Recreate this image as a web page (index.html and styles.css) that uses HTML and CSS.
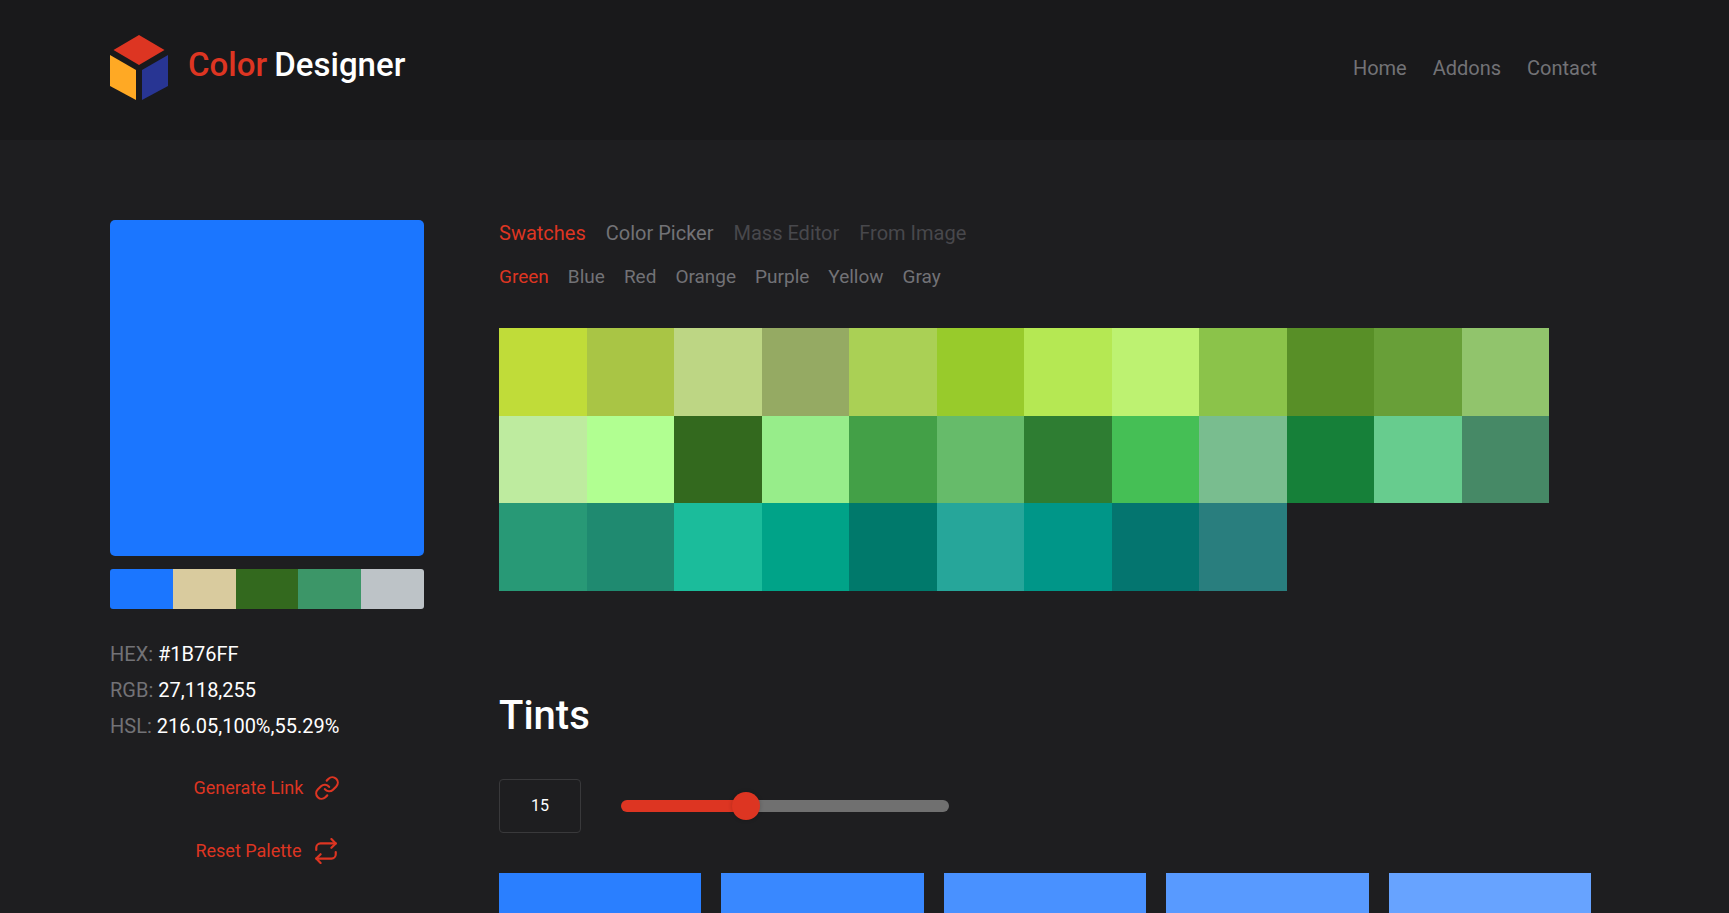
FILE: index.html
```html
<!DOCTYPE html>
<html lang="en">
<head>
<meta charset="utf-8">
<meta name="viewport" content="width=device-width, initial-scale=1">
<title>Color Designer</title>
<link rel="stylesheet" href="styles.css">
</head>
<body>
<header class="header">
  <a class="logo" href="#">
    <svg class="logo-mark" viewBox="0 0 58 66" aria-hidden="true">
      <path fill="#dd3522" d="M29 0 54.500 15 29 30 3.500 15z"/>
      <path fill="#ffa924" d="M0 20 26 35V65L0 51z"/>
      <path fill="#283593" d="M58 20 32 35V65L58 51z"/>
    </svg>
    <span class="logo-text"><span class="accent">Color</span> <span class="logo-second">Designer</span></span>
  </a>
  <nav class="nav">
    <a href="#">Home</a>
    <a href="#">Addons</a>
    <a href="#">Contact</a>
  </nav>
</header>
<main class="page">
  <aside class="sidebar">
    <div class="preview"></div>
    <div class="palette">
      <button aria-label="#1B76FF"></button><button aria-label="#D9CB9E"></button><button aria-label="#33691E"></button><button aria-label="#3C9668"></button><button aria-label="#BDC3C7"></button>
    </div>
    <dl class="values">
      <div><dt>HEX:</dt> <dd>#1B76FF</dd></div>
      <div><dt>RGB:</dt> <dd>27,118,255</dd></div>
      <div><dt>HSL:</dt> <dd>216.05,100%,55.29%</dd></div>
    </dl>
    <div class="actions">
      <button class="action">Generate Link
        <svg viewBox="0 0 24 24" aria-hidden="true"><path d="M10 13a5 5 0 0 0 7.540.54l3-3a5 5 0 0 0-7.070-7.070l-1.720 1.710"/><path d="M14 11a5 5 0 0 0-7.540-.54l-3 3a5 5 0 0 0 7.070 7.070l1.710-1.710"/></svg>
      </button>
      <button class="action">Reset Palette
        <svg viewBox="0 0 24 24" aria-hidden="true"><path d="m17 1 4 4-4 4"/><path d="M3 11V9a4 4 0 0 1 4-4h14"/><path d="m7 23-4-4 4-4"/><path d="M21 13v2a4 4 0 0 1-4 4H3"/></svg>
      </button>
    </div>
  </aside>
  <section class="content">
    <div class="tabs">
      <button class="tab active">Swatches</button>
      <button class="tab">Color Picker</button>
      <button class="tab" disabled>Mass Editor</button>
      <button class="tab" disabled>From Image</button>
    </div>
    <div class="tabs hues">
      <button class="tab active">Green</button>
      <button class="tab">Blue</button>
      <button class="tab">Red</button>
      <button class="tab">Orange</button>
      <button class="tab">Purple</button>
      <button class="tab">Yellow</button>
      <button class="tab">Gray</button>
    </div>
    <div class="swatches">
      <button aria-label="#C0DC39"></button><button aria-label="#A9C545"></button><button aria-label="#BDD684"></button><button aria-label="#95AA63"></button><button aria-label="#AAD055"></button><button aria-label="#98CB2B"></button><button aria-label="#B5E853"></button><button aria-label="#BDF271"></button><button aria-label="#8BC34A"></button><button aria-label="#588F27"></button><button aria-label="#689F38"></button><button aria-label="#91C46C"></button>
      <button aria-label="#BEEB9F"></button><button aria-label="#B1FF91"></button><button aria-label="#33691E"></button><button aria-label="#97ED8A"></button><button aria-label="#43A047"></button><button aria-label="#66BB6A"></button><button aria-label="#2E7D32"></button><button aria-label="#45BF55"></button><button aria-label="#79BD8F"></button><button aria-label="#168039"></button><button aria-label="#67CC8E"></button><button aria-label="#468966"></button>
      <button aria-label="#289976"></button><button aria-label="#1F8A70"></button><button aria-label="#1BBC9B"></button><button aria-label="#00A388"></button><button aria-label="#00796B"></button><button aria-label="#26A69A"></button><button aria-label="#009688"></button><button aria-label="#04756F"></button><button aria-label="#297E7E"></button>
    </div>
    <h2 class="title">Tints</h2>
    <div class="amount">
      <input class="amount-box" type="text" inputmode="numeric" value="15" aria-label="Number of tints">
      <input class="amount-range" type="range" min="5" max="32" value="15" aria-label="Number of tints slider">
    </div>
    <div class="tints">
      <div></div><div></div><div></div><div></div><div></div>
    </div>
  </section>
</main>
</body>
</html>
```
FILE: styles.css
```css
* { box-sizing: border-box; }

body {
  margin: 0;
  background: #1e1e20;
  color: #fff;
  font: 20px/36px Roboto, sans-serif;
}

a { color: inherit; text-decoration: none; }

button {
  margin: 0;
  padding: 0;
  border: 0;
  background: none;
  color: inherit;
  font: inherit;
  cursor: pointer;
}

.header {
  display: flex;
  justify-content: space-between;
  align-items: center;
  padding: 35px 132px 39px 110px;
  background: #19191b;
}

.logo { display: flex; align-items: flex-start; gap: 20px; }
.logo-mark { width: 58px; height: 66px; }
.logo-text { font-size: 33px; font-weight: 500; line-height: 60px; }
.accent { color: #dd3522; }
.logo-second { margin-left: -1px; }

.nav { display: flex; gap: 26px; color: #727276; }

.page {
  display: flex;
  gap: 75px;
  padding: 80px 138px 80px 110px;
}

.sidebar { flex: 0 0 314px; }
.preview { height: 336px; border-radius: 5px; background: #1b76ff; }

.palette {
  display: grid;
  grid-template-columns: repeat(5, 1fr);
  height: 40px;
  margin-top: 13px;
  border-radius: 3px;
  overflow: hidden;
}
.palette :nth-child(1) { background: #1b76ff; }
.palette :nth-child(2) { background: #d9cb9e; }
.palette :nth-child(3) { background: #33691e; }
.palette :nth-child(4) { background: #3c9668; }
.palette :nth-child(5) { background: #bdc3c7; }

.values { margin: 27px 0 0; }
.values dt, .values dd { display: inline; margin: 0; }
.values dt { color: #727276; }

.actions {
  display: flex;
  flex-direction: column;
  align-items: center;
  gap: 27px;
  margin-top: 26px;
}
.action {
  display: flex;
  align-items: center;
  gap: 11px;
  color: #dd3522;
  font-size: 18px;
}
.action svg {
  width: 26px;
  height: 26px;
  fill: none;
  stroke: currentColor;
  stroke-width: 2;
  stroke-linecap: round;
  stroke-linejoin: round;
}

.content { flex: 1; min-width: 0; }

.tabs { display: flex; gap: 20px; line-height: 26px; color: #727276; }
.tab.active { color: #dd3522; }
.tab:disabled { color: #48484c; }
.hues { gap: 19px; margin-top: 18px; font-size: 19px; }

.swatches {
  display: grid;
  grid-template-columns: repeat(12, 1fr);
  max-width: 1050px;
  margin-top: 38px;
}
.swatches button { aspect-ratio: 1; }
.swatches :nth-child(1) { background: #c0dc39; }
.swatches :nth-child(2) { background: #a9c545; }
.swatches :nth-child(3) { background: #bdd684; }
.swatches :nth-child(4) { background: #95aa63; }
.swatches :nth-child(5) { background: #aad055; }
.swatches :nth-child(6) { background: #98cb2b; }
.swatches :nth-child(7) { background: #b5e853; }
.swatches :nth-child(8) { background: #bdf271; }
.swatches :nth-child(9) { background: #8bc34a; }
.swatches :nth-child(10) { background: #588f27; }
.swatches :nth-child(11) { background: #689f38; }
.swatches :nth-child(12) { background: #91c46c; }
.swatches :nth-child(13) { background: #beeb9f; }
.swatches :nth-child(14) { background: #b1ff91; }
.swatches :nth-child(15) { background: #33691e; }
.swatches :nth-child(16) { background: #97ed8a; }
.swatches :nth-child(17) { background: #43a047; }
.swatches :nth-child(18) { background: #66bb6a; }
.swatches :nth-child(19) { background: #2e7d32; }
.swatches :nth-child(20) { background: #45bf55; }
.swatches :nth-child(21) { background: #79bd8f; }
.swatches :nth-child(22) { background: #168039; }
.swatches :nth-child(23) { background: #67cc8e; }
.swatches :nth-child(24) { background: #468966; }
.swatches :nth-child(25) { background: #289976; }
.swatches :nth-child(26) { background: #1f8a70; }
.swatches :nth-child(27) { background: #1bbc9b; }
.swatches :nth-child(28) { background: #00a388; }
.swatches :nth-child(29) { background: #00796b; }
.swatches :nth-child(30) { background: #26a69a; }
.swatches :nth-child(31) { background: #009688; }
.swatches :nth-child(32) { background: #04756f; }
.swatches :nth-child(33) { background: #297e7e; }

.title { margin: 101px 0 39px; font-size: 40px; font-weight: 500; line-height: 48px; }

.amount { display: flex; align-items: center; gap: 40px; }
.amount-box {
  width: 82px;
  height: 54px;
  border: 1px solid #39393b;
  border-radius: 4px;
  background: transparent;
  color: #fff;
  font: 16px Roboto, sans-serif;
  text-align: center;
}
.amount-range {
  appearance: none;
  width: 328px;
  height: 12px;
  margin: 0;
  border-radius: 6px;
  background: linear-gradient(to right, #dd3522 38%, #707070 38%);
}
.amount-range::-webkit-slider-thumb {
  appearance: none;
  width: 28px;
  height: 28px;
  border-radius: 50%;
  background: #dd3522;
  box-shadow: 0 0 4px rgba(0, 0, 0, 0.2);
}

.tints {
  display: grid;
  grid-template-columns: repeat(5, 1fr);
  gap: 20px;
  margin-top: 40px;
}
.tints div { height: 120px; }
.tints :nth-child(1) { background: #2a7fff; }
.tints :nth-child(2) { background: #3988ff; }
.tints :nth-child(3) { background: #4991ff; }
.tints :nth-child(4) { background: #589aff; }
.tints :nth-child(5) { background: #67a3ff; }
```
